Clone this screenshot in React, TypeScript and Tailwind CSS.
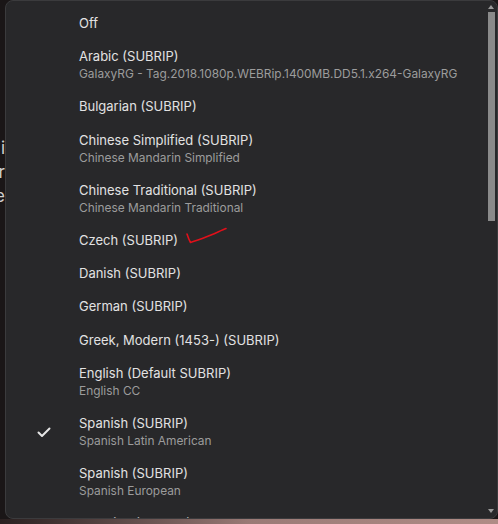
import type { ReactNode } from "react";

type Track = {
  title: string;
  sub?: string;
  selected?: boolean;
};

const tracks: Track[] = [
  { title: "Off" },
  {
    title: "Arabic (SUBRIP)",
    sub: "GalaxyRG - Tag.2018.1080p.WEBRip.1400MB.DD5.1.x264-GalaxyRG",
  },
  { title: "Bulgarian (SUBRIP)" },
  { title: "Chinese Simplified (SUBRIP)", sub: "Chinese Mandarin Simplified" },
  { title: "Chinese Traditional (SUBRIP)", sub: "Chinese Mandarin Traditional" },
  { title: "Czech (SUBRIP)" },
  { title: "Danish (SUBRIP)" },
  { title: "German (SUBRIP)" },
  { title: "Greek, Modern (1453-) (SUBRIP)" },
  { title: "English (Default SUBRIP)", sub: "English CC" },
  { title: "Spanish (SUBRIP)", sub: "Spanish Latin American", selected: true },
  { title: "Spanish (SUBRIP)", sub: "Spanish European" },
  { title: "Estonian (SUBRIP)" },
];

function Check(): ReactNode {
  return (
    <svg width="16" height="16" viewBox="0 0 16 16" fill="none">
      <path
        d="M2.5 8.5 L6 12 L13.5 4.5"
        stroke="#e6e6e6"
        strokeWidth="2"
        strokeLinecap="round"
        strokeLinejoin="round"
      />
    </svg>
  );
}

function TrackRow({ track }: { track: Track }): ReactNode {
  return (
    <div className="flex items-center py-[8.1px]">
      <div className="w-[73px] flex justify-end pr-[27px]">
        {track.selected && <Check />}
      </div>
      <div className="flex flex-col">
        <span className="text-[13px] leading-[17px] text-[#e2e2e2] whitespace-nowrap">
          {track.title}
        </span>
        {track.sub && (
          <span className="mt-[1px] text-[11.9px] leading-[16px] text-[#9c9c9c] whitespace-nowrap">
            {track.sub}
          </span>
        )}
      </div>
    </div>
  );
}

function Scrollbar(): ReactNode {
  return (
    <div className="w-[11px] flex flex-col items-center pt-[4px] pb-[5px] pr-[1px]">
      <div className="w-0 h-0 border-l-[3px] border-r-[3px] border-b-[4px] border-l-transparent border-r-transparent border-b-[#9a9a9a]" />
      <div className="w-[7px] h-[209px] mt-[3px] bg-[#8a8a8a]" />
      <div className="flex-1" />
      <div className="w-0 h-0 border-l-[3px] border-r-[3px] border-t-[4px] border-l-transparent border-r-transparent border-t-[#9a9a9a]" />
    </div>
  );
}

export default function App(): ReactNode {
  return (
    <div className="w-[498px] h-[524px] flex flex-col bg-[#1a1617] overflow-hidden font-['Inter',sans-serif]">
      <div className="flex h-[519px]">
        <div className="w-[5px] overflow-hidden flex flex-col items-end pt-[136px] text-[17px] leading-[24px] text-[#cfcfcf]">
          <span>i</span>
          <span>r</span>
          <span>e</span>
        </div>
        <div className="relative flex-1 flex rounded-[8px] border border-[#3b3b3d] bg-[#28282a] overflow-hidden">
          <div className="flex-1 flex flex-col pt-[6px] overflow-hidden">
            {tracks.map((t, i) => (
              <TrackRow key={i} track={t} />
            ))}
          </div>
          <Scrollbar />
          <svg
            className="absolute left-[175px] top-[224px]"
            width="50"
            height="22"
            viewBox="0 0 50 22"
            fill="none"
          >
            <path
              d="M6 9 C7 12 8 15 9.5 17.5 C14 16 22 13.5 30 10 C36 7.5 41 5 45 3.5"
              stroke="#e0101a"
              strokeWidth="1.6"
              strokeLinecap="round"
              strokeLinejoin="round"
            />
          </svg>
        </div>
      </div>
      <div className="h-[5px] bg-gradient-to-r from-[#2a2020] via-[#9a7a76] to-[#b08c86]" />
    </div>
  );
}
